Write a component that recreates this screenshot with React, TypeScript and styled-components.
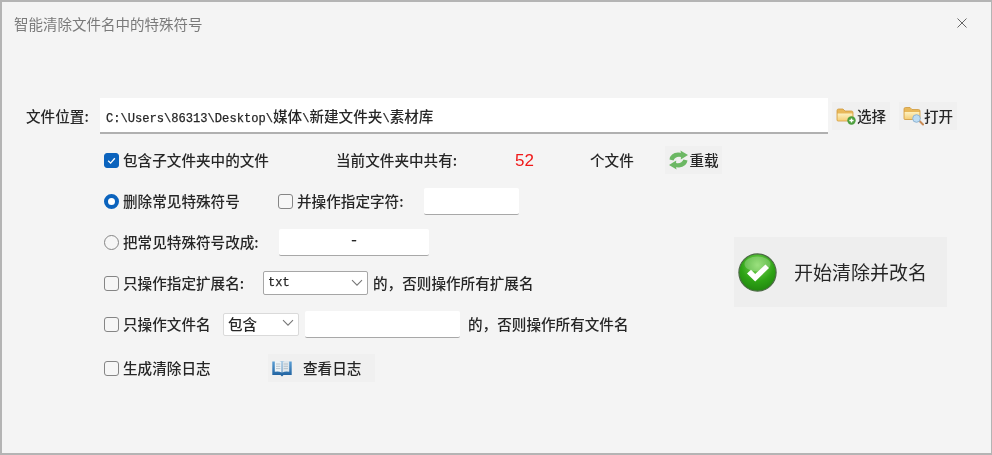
import React from 'react';
import styled, { createGlobalStyle } from 'styled-components';

const cjk = '"Noto Sans CJK SC", "Noto Sans", sans-serif';
const mono = '"Liberation Mono", "Noto Sans CJK SC", monospace';

const Global = createGlobalStyle`
  html, body { margin: 0; padding: 0; background: #f4f4f4; overflow: hidden; }
  * { box-sizing: border-box; }
`;

const FolderBase = () => (
  <>
    <path d="M1 4.5 Q1 3 2.5 3 H7 L9 5 H15.5 Q17 5 17 6.5 V14 Q17 15 16 15 H2 Q1 15 1 14 Z" fill="#e8b85a" stroke="#d19a3c" strokeWidth="0.8" />
    <path d="M1.6 7.5 H16.4 V14 Q16.4 14.6 15.8 14.6 H2.2 Q1.6 14.6 1.6 14 Z" fill="url(#folderFill)" />
  </>
);

const IconDefs = () => (
  <svg width="0" height="0" style={{ position: 'absolute' }}>
    <defs>
      <linearGradient id="folderFill" x1="0" y1="0" x2="0" y2="1">
        <stop offset="0" stopColor="#fdf1c0" />
        <stop offset="1" stopColor="#f5cf78" />
      </linearGradient>
      <radialGradient id="greenBall" cx="0.5" cy="0.3" r="0.8">
        <stop offset="0" stopColor="#7fd85a" />
        <stop offset="0.55" stopColor="#2ea315" />
        <stop offset="1" stopColor="#1c7d0c" />
      </radialGradient>
      <linearGradient id="bookCover" x1="0" y1="0" x2="0" y2="1">
        <stop offset="0" stopColor="#5b9fd6" />
        <stop offset="1" stopColor="#1c5e9c" />
      </linearGradient>
    </defs>
  </svg>
);

const FolderAddIcon = () => (
  <svg width="21" height="20" viewBox="0 0 21 20">
    <FolderBase />
    <circle cx="15.5" cy="14.5" r="4.2" fill="#4c9e3c" />
    <path d="M15.5 12.4 V16.6 M13.4 14.5 H17.6" stroke="#fff" strokeWidth="1.4" />
  </svg>
);

const FolderSearchIcon = () => (
  <svg width="21" height="20" viewBox="0 0 21 20">
    <g transform="translate(0 -1.5)"><FolderBase /></g>
    <path d="M16 14.5 L20 18.5" stroke="#c98a52" strokeWidth="2" strokeLinecap="round" />
    <circle cx="13.5" cy="12.5" r="3.8" fill="#bcdcf4" stroke="#8fb4d2" strokeWidth="1" />
  </svg>
);

const RefreshIcon = () => (
  <svg width="21" height="20" viewBox="0 0 21 20">
    <path d="M1.5 9.5 Q2.5 3 10 2.6 L13 2.8 L12.4 0.4 L20 5 L12.8 9.4 L12.9 7 Q7.5 6 5.5 10.5 Z" fill="#6cb864" />
    <path d="M19.5 10.5 Q18.5 17 11 17.4 L8 17.2 L8.6 19.6 L1 15 L8.2 10.6 L8.1 13 Q13.5 14 15.5 9.5 Z" fill="#6cb864" />
  </svg>
);

const BookIcon = () => (
  <svg width="20" height="19" viewBox="0 0 20 19">
    <path d="M0.3 2.5 H19.7 V16 H11.5 L10 17.6 L8.5 16 H0.3 Z" fill="url(#bookCover)" />
    <path d="M2.8 2 Q6.5 1.3 9.6 2.9 V13.4 Q6.5 12 2.8 12.8 Z" fill="#eef3f6" />
    <path d="M17.2 2 Q13.5 1.3 10.4 2.9 V13.4 Q13.5 12 17.2 12.8 Z" fill="#dfe7ec" />
    <path d="M4 5 H8.4 M4 7.3 H8.4 M4 9.6 H8.4 M11.6 5 H16 M11.6 7.3 H16 M11.6 9.6 H16" stroke="#a9b7c2" strokeWidth="0.8" />
  </svg>
);

const StartIcon = () => (
  <svg width="39" height="39" viewBox="0 0 39 39">
    <circle cx="19.5" cy="19.5" r="18.6" fill="url(#greenBall)" stroke="#4d6b46" strokeWidth="1.2" />
    <ellipse cx="19.5" cy="11" rx="13" ry="7.5" fill="#ffffff" opacity="0.22" />
    <path d="M9 20.5 L13 16.8 L17.2 21 L27.5 11.5 L31 15 L17.2 28.5 Z" fill="#ffffff" />
  </svg>
);

const Chevron = () => (
  <svg width="12" height="8" viewBox="0 0 12 8">
    <path d="M1 1.2 L6 6.2 L11 1.2" fill="none" stroke="#777" strokeWidth="1.1" />
  </svg>
);

export default function App() {
  return (
    <Window>
      <Global />
      <IconDefs />
      <TitleBar>
        <Title>智能清除文件名中的特殊符号</Title>
        <CloseIcon viewBox="0 0 10 10">
          <path d="M0.5 0.5 L9.5 9.5 M9.5 0.5 L0.5 9.5" stroke="#666" strokeWidth="1" />
        </CloseIcon>
      </TitleBar>
      <Body>
        <PathRow>
          <PathLabel>文件位置:</PathLabel>
          <PathField>
            <PathText>
              C:\Users\86313\Desktop\<PathCjk>媒体</PathCjk>\<PathCjk>新建文件夹</PathCjk>\<PathCjk>素材库</PathCjk>
            </PathText>
          </PathField>
          <SmallButton $w={58} $left={4}><FolderAddIcon />选择</SmallButton>
          <SmallButton $w={58} $left={9}><FolderSearchIcon />打开</SmallButton>
        </PathRow>
        <Lower>
          <Options>
            <Row>
              <Cell $w={232}><CheckBox $checked><CheckMark viewBox="0 0 10 10"><path d="M2 5.2 L4.2 7.4 L8 3" fill="none" stroke="#fff" strokeWidth="1.2" /></CheckMark></CheckBox>包含子文件夹中的文件</Cell>
              <Cell $w={179}>当前文件夹中共有:</Cell>
              <Count $w={75}>52</Count>
              <Cell $w={75}>个文件</Cell>
              <SmallButton $w={57}><RefreshIcon />重载</SmallButton>
            </Row>
            <Row>
              <Cell $w={174}><Radio $checked />删除常见特殊符号</Cell>
              <Cell $w={146}><CheckBox />并操作指定字符:</Cell>
              <TextBox $w={95} />
            </Row>
            <Row>
              <Cell $w={175}><Radio />把常见特殊符号改成:</Cell>
              <TextBox $w={150}>-</TextBox>
            </Row>
            <Row>
              <Cell $w={159}><CheckBox />只操作指定扩展名:</Cell>
              <ExtSelect>txt<Chevron /></ExtSelect>
              <Cell $left={5}>的，否则操作所有扩展名</Cell>
            </Row>
            <Row>
              <Cell $w={119}><CheckBox />只操作文件名</Cell>
              <ModeSelect>包含<Chevron /></ModeSelect>
              <TextBox $w={155} $left={6} />
              <Cell $left={8}>的，否则操作所有文件名</Cell>
            </Row>
            <LastRow>
              <Cell $w={164}><CheckBox />生成清除日志</Cell>
              <LogButton><BookIcon /><span>查看日志</span></LogButton>
            </LastRow>
          </Options>
          <StartButton><StartIcon /><span>开始清除并改名</span></StartButton>
        </Lower>
      </Body>
    </Window>
  );
}

const Window = styled.div`
  width: 992px;
  height: 455px;
  background: #f4f4f4;
  border: 2px solid #b4b4b4;
  border-right-width: 1px;
  font-family: ${cjk};
  font-size: 14.6px;
  font-weight: 500;
  color: #262626;
  filter: blur(0.55px);
  overflow: hidden;
`;
const TitleBar = styled.div`
  height: 42px;
  display: flex;
  align-items: center;
  justify-content: space-between;
  padding: 0 24px 0 12px;
`;
const Title = styled.div`
  color: #7a7a7a;
  font-size: 14.5px;
  font-weight: 400;
`;
const CloseIcon = styled.svg`
  width: 10px;
  height: 10px;
`;
const Body = styled.div`
  padding: 54px 0 0 24px;
`;
const PathRow = styled.div`
  display: flex;
  align-items: center;
  height: 36px;
`;
const PathLabel = styled.div`
  width: 74px;
  padding-bottom: 2px;
`;
const PathField = styled.div`
  width: 728px;
  height: 36px;
  background: #fff;
  border-bottom: 2px solid #b0b0b0;
  display: flex;
  align-items: center;
  padding-left: 6px;
`;
const PathText = styled.div`
  font-family: ${mono};
  font-size: 12.1px;
  -webkit-text-stroke: 0.25px #262626;
  white-space: pre;
`;
const PathCjk = styled.span`
  font-family: ${cjk};
  font-size: 14.6px;
  -webkit-text-stroke: 0;
`;
const SmallButton = styled.div<{ $w: number; $left?: number }>`
  width: ${(p) => p.$w}px;
  height: 28px;
  margin-left: ${(p) => p.$left ?? 0}px;
  padding-bottom: 2px;
  background: #f0f0f0;
  display: flex;
  align-items: center;
  justify-content: center;
  white-space: nowrap;
  svg {
    margin-top: 2px;
  }
`;
const Lower = styled.div`
  display: flex;
  align-items: flex-start;
  margin-top: 12px;
  padding-left: 78px;
`;
const Options = styled.div`
  width: 630px;
  display: flex;
  flex-direction: column;
  gap: 13px;
`;
const Row = styled.div`
  display: flex;
  align-items: center;
  height: 28px;
  white-space: nowrap;
`;
const LastRow = styled(Row)`
  margin-top: 3px;
`;
const Cell = styled.div<{ $w?: number; $left?: number }>`
  display: flex;
  align-items: center;
  flex: none;
  padding-bottom: 2px;
  width: ${(p) => (p.$w ? `${p.$w}px` : 'auto')};
  margin-left: ${(p) => p.$left ?? 0}px;
`;
const Count = styled.div<{ $w: number }>`
  width: ${(p) => p.$w}px;
  padding-top: 2px;
  color: #f01818;
  font-family: 'Liberation Sans', sans-serif;
  font-size: 17px;
  font-weight: 400;
`;
const CheckBox = styled.span<{ $checked?: boolean }>`
  flex: none;
  width: 15px;
  height: 15px;
  margin: 2px 4px 0 0;
  border-radius: 3px;
  display: flex;
  align-items: center;
  justify-content: center;
  background: ${(p) => (p.$checked ? '#0b63bd' : '#f6f6f6')};
  border: 1.5px solid ${(p) => (p.$checked ? '#0b63bd' : '#858585')};
`;
const CheckMark = styled.svg`
  width: 11px;
  height: 11px;
`;
const Radio = styled.span<{ $checked?: boolean }>`
  flex: none;
  width: 15px;
  height: 15px;
  margin: 2px 4px 0 0;
  border-radius: 50%;
  background: ${(p) => (p.$checked ? '#fff' : '#f6f6f6')};
  border: ${(p) => (p.$checked ? '4px solid #0b63bd' : '1.5px solid #858585')};
`;
const TextBox = styled.div<{ $w: number; $left?: number }>`
  width: ${(p) => p.$w}px;
  height: 27px;
  margin-left: ${(p) => p.$left ?? 0}px;
  background: #fff;
  border-bottom: 1.5px solid #a8a8a8;
  border-radius: 2px;
  display: flex;
  align-items: center;
  justify-content: center;
  font-family: ${mono};
  font-size: 15px;
  -webkit-text-stroke: 0.25px #262626;
`;
const ExtSelect = styled.div`
  width: 105px;
  height: 24px;
  background: #fff;
  border: 1px solid #a6a6a6;
  border-radius: 2px;
  display: flex;
  align-items: center;
  justify-content: space-between;
  padding: 0 4px 0 4px;
  font-family: ${mono};
  font-size: 12px;
  -webkit-text-stroke: 0.25px #262626;
  flex: none;
`;
const ModeSelect = styled.div`
  width: 76px;
  height: 23px;
  padding: 0 4px 2px 4px;
  background: #fff;
  border: 1px solid #dadada;
  border-radius: 2px;
  display: flex;
  align-items: center;
  justify-content: space-between;
  flex: none;
`;
const LogButton = styled.div`
  width: 107px;
  height: 28px;
  background: #f0f0f0;
  display: flex;
  align-items: center;
  padding: 0 0 2px 4px;
  gap: 11px;
  svg {
    margin-top: 3px;
  }
`;
const StartButton = styled.div`
  width: 213px;
  height: 70px;
  margin-top: 91px;
  background: #eeeeee;
  display: flex;
  align-items: center;
  padding-left: 4px;
  gap: 17px;
  font-size: 19px;
  font-weight: 400;
  white-space: nowrap;
  span {
    padding-bottom: 2px;
  }
`;
